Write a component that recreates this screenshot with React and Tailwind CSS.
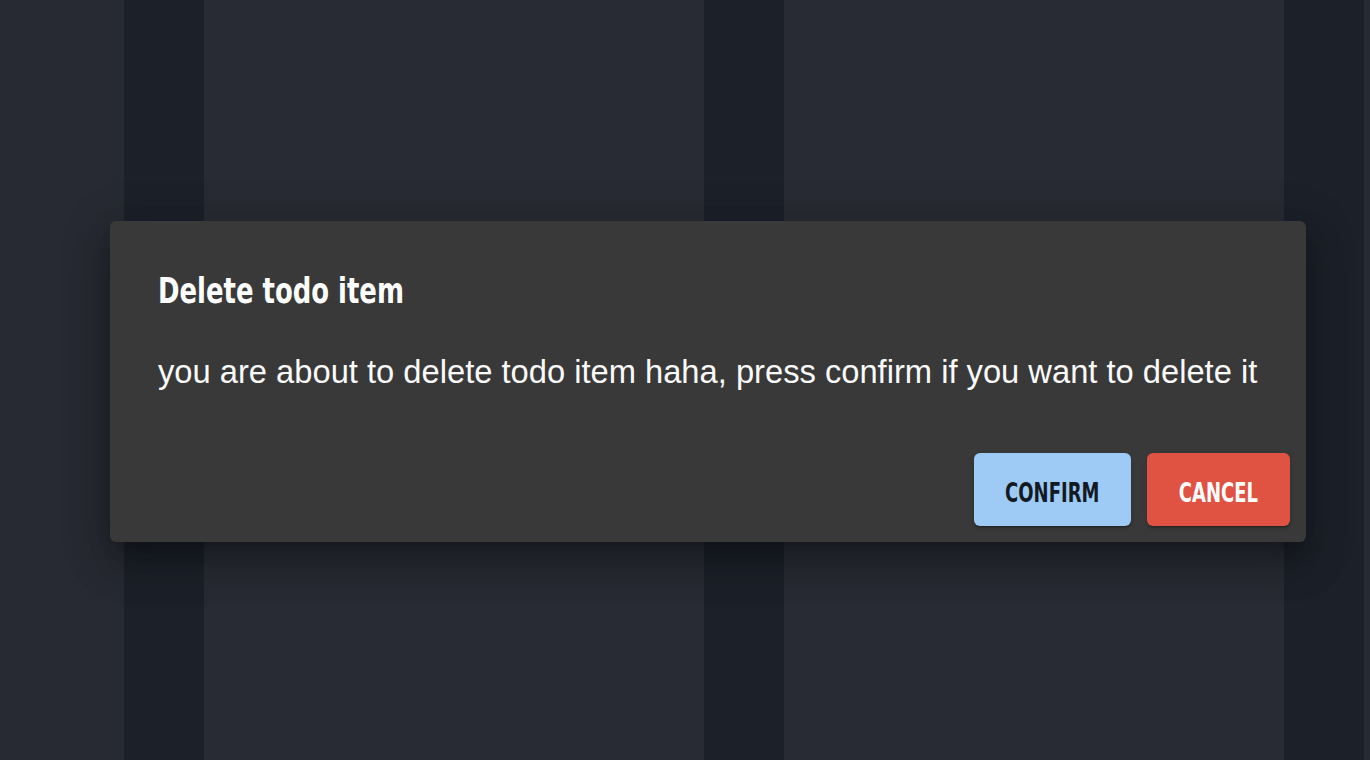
const condensed = { fontFamily: '"DejaVu Sans Condensed", "Liberation Sans", sans-serif' };

export default function App() {
    return (
        <div className="relative h-screen w-full overflow-hidden bg-[#282a33]">
            {/* board columns behind the dialog */}
            <div className="flex h-full pl-[124px]">
                <div className="w-[80px] shrink-0 bg-[#1c2029]" />
                <div className="w-[500px] shrink-0 bg-[#282b33]" />
                <div className="w-[80px] shrink-0 bg-[#1c2029]" />
                <div className="w-[500px] shrink-0 bg-[#282b33]" />
                <div className="w-[80px] shrink-0 bg-[#1c2029]" />
            </div>

            <div
                role="dialog"
                className="absolute left-[110px] top-[221px] flex h-[321px] w-[1196px] flex-col rounded-md bg-[#393939] text-white shadow-[0_11px_15px_-7px_rgba(0,0,0,0.25),0_24px_38px_3px_rgba(0,0,0,0.18),0_9px_46px_8px_rgba(0,0,0,0.15)]"
            >
                <h2 className="px-12 pt-[52px] text-[36px] font-bold leading-none" style={condensed}>
                    <span className="inline-block origin-left scale-x-[0.8]">Delete todo item</span>
                </h2>
                <p className="mt-[47px] px-12 font-['Liberation_Sans',Arial,sans-serif] text-[32.7px] leading-none text-[#fafafa]">
                    you are about to delete todo item haha, press confirm if you want to delete it
                </p>
                <div className="mt-auto flex justify-end gap-4 p-4">
                    <button
                        className="flex h-[73px] w-[157px] items-center justify-center rounded-md bg-[#9ecbf5] pt-[6px] text-[26px] font-bold leading-none text-[#141a24] shadow-[0_3px_1px_-2px_rgba(0,0,0,0.2),0_2px_2px_0_rgba(0,0,0,0.14),0_1px_5px_0_rgba(0,0,0,0.12)]"
                        style={condensed}
                    >
                        <span className="inline-block scale-x-[0.77]">CONFIRM</span>
                    </button>
                    <button
                        className="flex h-[73px] w-[143px] items-center justify-center rounded-md bg-[#e05242] pt-[6px] text-[26px] font-bold leading-none text-white shadow-[0_3px_1px_-2px_rgba(0,0,0,0.2),0_2px_2px_0_rgba(0,0,0,0.14),0_1px_5px_0_rgba(0,0,0,0.12)]"
                        style={condensed}
                    >
                        <span className="inline-block scale-x-[0.77]">CANCEL</span>
                    </button>
                </div>
            </div>
        </div>
    );
}
